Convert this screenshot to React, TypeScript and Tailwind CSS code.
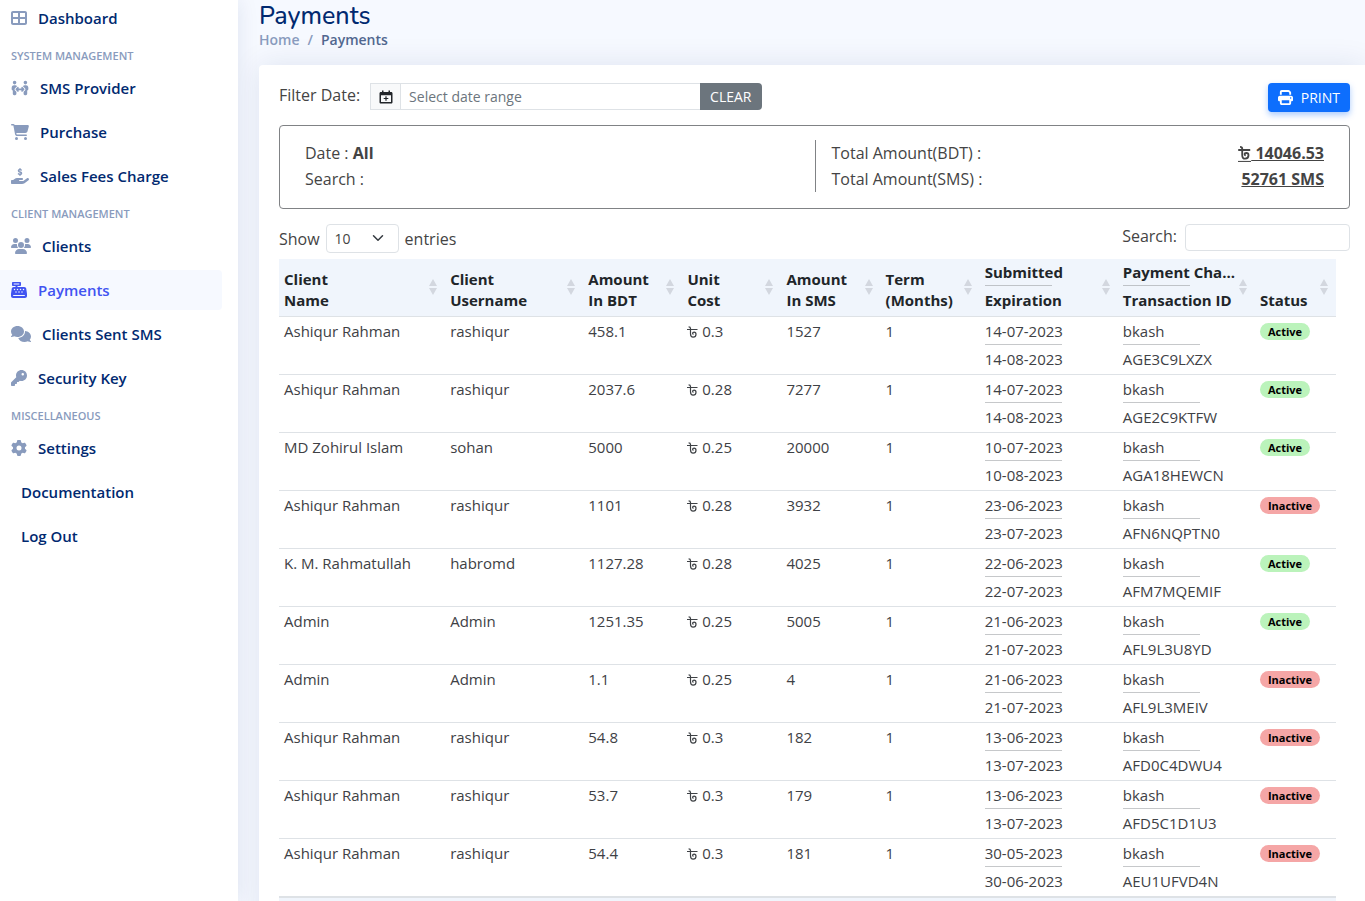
import type { ComponentType } from "react";
import {
  FaTableCellsLarge,
  FaPeopleArrows,
  FaCartShopping,
  FaHandHoldingDollar,
  FaUsers,
  FaCashRegister,
  FaComments,
  FaKey,
  FaGear,
  FaPrint,
} from "react-icons/fa6";

type NavLink = { label: string; icon?: ComponentType<{ className?: string }>; wide?: string; active?: boolean };
type NavGroup = { title?: string; links: NavLink[] };

const groups: NavGroup[] = [
  { links: [{ label: "Dashboard", icon: FaTableCellsLarge, wide: "w-4" }] },
  {
    title: "System Management",
    links: [
      { label: "SMS Provider", icon: FaPeopleArrows, wide: "w-[18px]" },
      { label: "Purchase", icon: FaCartShopping, wide: "w-[18px]" },
      { label: "Sales Fees Charge", icon: FaHandHoldingDollar, wide: "w-[18px]" },
    ],
  },
  {
    title: "Client Management",
    links: [
      { label: "Clients", icon: FaUsers, wide: "w-5" },
      { label: "Payments", icon: FaCashRegister, wide: "w-4", active: true },
      { label: "Clients Sent SMS", icon: FaComments, wide: "w-5" },
      { label: "Security Key", icon: FaKey, wide: "w-4" },
    ],
  },
  {
    title: "Miscellaneous",
    links: [{ label: "Settings", icon: FaGear, wide: "w-4" }, { label: "Documentation" }, { label: "Log Out" }],
  },
];

const columns = [
  { lines: ["Client", "Name"], width: "w-[166px]" },
  { lines: ["Client", "Username"], width: "w-[138px]" },
  { lines: ["Amount", "In BDT"], width: "w-[99px]" },
  { lines: ["Unit", "Cost"], width: "w-[99px]" },
  { lines: ["Amount", "In SMS"], width: "w-[99px]" },
  { lines: ["Term", "(Months)"], width: "w-[99px]" },
  { lines: ["Submitted", "Expiration"], width: "w-[138px]", ruled: true },
  { lines: ["Payment Cha...", "Transaction ID"], width: "w-[137px]", ruled: true },
  { lines: ["Status"], width: "w-[81px]" },
];

const rows = [
  ["Ashiqur Rahman", "rashiqur", "458.1", "0.3", "1527", "14-07-2023", "14-08-2023", "AGE3C9LXZX", "Active"],
  ["Ashiqur Rahman", "rashiqur", "2037.6", "0.28", "7277", "14-07-2023", "14-08-2023", "AGE2C9KTFW", "Active"],
  ["MD Zohirul Islam", "sohan", "5000", "0.25", "20000", "10-07-2023", "10-08-2023", "AGA18HEWCN", "Active"],
  ["Ashiqur Rahman", "rashiqur", "1101", "0.28", "3932", "23-06-2023", "23-07-2023", "AFN6NQPTN0", "Inactive"],
  ["K. M. Rahmatullah", "habromd", "1127.28", "0.28", "4025", "22-06-2023", "22-07-2023", "AFM7MQEMIF", "Active"],
  ["Admin", "Admin", "1251.35", "0.25", "5005", "21-06-2023", "21-07-2023", "AFL9L3U8YD", "Active"],
  ["Admin", "Admin", "1.1", "0.25", "4", "21-06-2023", "21-07-2023", "AFL9L3MEIV", "Inactive"],
  ["Ashiqur Rahman", "rashiqur", "54.8", "0.3", "182", "13-06-2023", "13-07-2023", "AFD0C4DWU4", "Inactive"],
  ["Ashiqur Rahman", "rashiqur", "53.7", "0.3", "179", "13-06-2023", "13-07-2023", "AFD5C1D1U3", "Inactive"],
  ["Ashiqur Rahman", "rashiqur", "54.4", "0.3", "181", "30-05-2023", "30-06-2023", "AEU1UFVD4N", "Inactive"],
];

/* Bengali taka sign; the total variant is bold and underlined */
function Taka({ total = false }: { total?: boolean }) {
  return (
    <svg
      role="img"
      aria-label="BDT"
      viewBox={total ? "0 0 11 14" : "0 0 11 12"}
      className={`inline-block ${total ? "h-4 w-[13px] align-[-3px]" : "h-3 w-[11px] align-[-1px]"}`}
      fill="none"
      stroke="currentColor"
      strokeWidth={total ? 1.6 : 1.2}
    >
      <path d="M0 3.500h10.500M1.600.8c1.300 0 1.900.5 1.900 1.600v5.400c0 2.100 1 3.300 2.600 3.300s2.900-1.200 2.900-2.900c0-1.300-.8-2.100-1.900-2.100-.9 0-1.500.5-1.500 1.200 0 .6.400.9 1 .9" />
      {total && <path d="M-1 13.500h13" strokeWidth="0.9" />}
    </svg>
  );
}

function CalendarPlus() {
  return (
    <svg viewBox="0 0 14 14" className="size-3.5" aria-hidden="true">
      <path
        fill="currentColor"
        fillRule="evenodd"
        d="M3 .5h1.500V2h5V.5H11V2h1.200c.7 0 1.300.6 1.300 1.300v8.900c0 .7-.6 1.300-1.300 1.300H1.800c-.7 0-1.300-.6-1.300-1.300V3.300C.5 2.600 1.100 2 1.800 2H3zM2 5.200V12h10V5.200zM6.400 6.300h1.200v1.600h1.700v1.200H7.600v1.700H6.400V9.100H4.700V7.900h1.700z"
      />
    </svg>
  );
}

function SortArrows() {
  return (
    <svg viewBox="0 0 8 16" className="h-4 w-2 shrink-0" fill="#d3d7df" aria-hidden="true">
      <path d="M4 0 8 7H0zM4 16 8 9H0z" />
    </svg>
  );
}

function NavItem({ link }: { link: NavLink }) {
  const Icon = link.icon;
  return (
    <li>
      <a
        href="#"
        aria-current={link.active ? "page" : undefined}
        className={`flex h-10 items-center rounded-r text-[15px] font-semibold ${
          link.active ? "bg-[#f6f9ff] text-[#4154f1]" : "text-[#012970]"
        } ${Icon ? "gap-[11px] pl-[11px]" : "pl-[21px]"}`}
      >
        {Icon && <Icon className={`h-4 shrink-0 ${link.wide} ${link.active ? "text-[#4154f1]" : "text-[#899bbd]"}`} />}
        {link.label}
      </a>
    </li>
  );
}

function Sidebar() {
  return (
    <aside className="z-10 w-[238px] shrink-0 bg-white pr-4 shadow-[0_0_20px_rgba(1,41,112,0.1)]">
      <nav aria-label="Main" className="-mt-0.5">
        {groups.map((group, i) => (
          <section key={i}>
            {group.title && (
              <h2 className="flex h-6 items-center pl-[11px] text-[11px] font-semibold text-[#899bbd] uppercase">
                {group.title}
              </h2>
            )}
            <ul className="flex flex-col gap-1 pb-[6px]">
              {group.links.map((link) => (
                <NavItem key={link.label} link={link} />
              ))}
            </ul>
          </section>
        ))}
      </nav>
    </aside>
  );
}

function Toolbar() {
  return (
    <div className="flex items-start justify-between">
      <div className="flex items-start">
        <label htmlFor="range" className="mr-[10px] text-base leading-6">
          Filter Date:
        </label>
        <span className="flex h-[27px] w-[31px] items-center justify-center border border-[#dee2e6] bg-[#f8f9fa] text-[#212529]">
          <CalendarPlus />
        </span>
        <input
          id="range"
          placeholder="Select date range"
          className="h-[27px] w-[299px] border-y border-[#dee2e6] px-2 text-sm outline-none placeholder:text-[#6c757d]"
        />
        <button className="h-[27px] rounded-r bg-[#6c757d] px-[10px] text-sm text-white">CLEAR</button>
      </div>
      <button className="flex h-[29px] items-center gap-2 rounded bg-[#0d6efd] px-[10px] text-sm text-white shadow-[0_3px_6px_rgba(13,110,253,0.35)]">
        <FaPrint className="size-[15px]" />
        PRINT
      </button>
    </div>
  );
}

function Summary() {
  return (
    <section className="mt-[13px] grid grid-cols-2 rounded border border-[#808285] px-[25px] pt-[14px] pb-4 text-base leading-[26px]">
      <div>
        <p>
          Date : <b>All</b>
        </p>
        <p>Search :</p>
      </div>
      <dl className="border-l border-[#808285] pl-4">
        <div className="flex h-[26px] justify-between">
          <dt>Total Amount(BDT) :</dt>
          <dd className="font-bold underline">
            <Taka total /> 14046.53
          </dd>
        </div>
        <div className="flex h-[26px] justify-between">
          <dt>Total Amount(SMS) :</dt>
          <dd className="font-bold underline">52761 SMS</dd>
        </div>
      </dl>
    </section>
  );
}

function TableControls() {
  return (
    <div className="mt-[11px] flex items-start justify-between text-base">
      <label className="mt-1 flex items-center gap-[6px] leading-6">
        Show
        <span className="relative">
          <select defaultValue="10" className="block h-[29px] w-[73px] appearance-none rounded border border-[#dee2e6] bg-white pl-2 text-sm">
            <option>10</option>
            <option>25</option>
            <option>50</option>
          </select>
          <svg viewBox="0 0 16 16" className="pointer-events-none absolute top-2 right-[15px] size-3" fill="none" stroke="#343a40" strokeWidth="2" strokeLinecap="round" strokeLinejoin="round" aria-hidden="true">
            <path d="m2 5 6 6 6-6" />
          </svg>
        </span>
        entries
      </label>
      <label className="mt-1 flex items-start gap-2 leading-6">
        Search:
        <input type="search" className="h-[27px] w-[165px] rounded border border-[#dee2e6] px-2 text-sm outline-none" />
      </label>
    </div>
  );
}

function PaymentsTable() {
  return (
    <table className="mt-[6px] w-[calc(100%-14px)] table-fixed border-collapse text-left text-[15px]">
      <thead>
        <tr className="h-[57px] border-b border-[#dee2e6] bg-[#f0f5fc] text-[#212529]">
          {columns.map((col) => (
            <th key={col.lines.join()} className={`${col.width} pt-px pr-2 pb-[5px] pl-[5px] align-bottom font-bold`}>
              <div className="flex items-end justify-between">
                <div className="w-0 flex-1 leading-[21px] whitespace-nowrap">
                  {col.ruled ? (
                    <>
                      <div className="leading-5">{col.lines[0]}</div>
                      <hr className="mt-[3px] mb-1 w-[67px] border-[#bfc3c8]" />
                      <div>{col.lines[1]}</div>
                    </>
                  ) : (
                    col.lines.map((line) => <div key={line}>{line}</div>)
                  )}
                </div>
                <span className="mb-4 flex">
                  <SortArrows />
                </span>
              </div>
            </th>
          ))}
        </tr>
      </thead>
      <tbody>
        {rows.map(([name, user, bdt, cost, sms, from, to, trx, status]) => (
          <tr key={trx} className="border-b border-[#dee2e6] align-top leading-[21px] text-[#3e4145] last:border-b-2">
            <td className="px-[5px] py-1">{name}</td>
            <td className="px-[5px] py-1">{user}</td>
            <td className="px-[5px] py-1">{bdt}</td>
            <td className="px-[5px] py-1">
              <Taka /> {cost}
            </td>
            <td className="px-[5px] py-1">{sms}</td>
            <td className="px-[5px] py-1">1</td>
            <td className="px-[5px] py-1">
              {from}
              <hr className="mt-[2px] mb-1 w-[77px] border-[#c6c8ca]" />
              {to}
            </td>
            <td className="px-[5px] py-1">
              bkash
              <hr className="mt-[2px] mb-1 w-[77px] border-[#c6c8ca]" />
              {trx}
            </td>
            <td className="px-[5px] py-[6px]">
              <span
                className={`block w-fit rounded-full px-2 text-[11px] leading-[17px] font-bold text-black ${
                  status === "Active" ? "bg-[#bbf3bb]" : "bg-[#f5a6a6]"
                }`}
              >
                {status}
              </span>
            </td>
          </tr>
        ))}
      </tbody>
      <tfoot>
        <tr className="h-14 bg-[#f0f5fc]">
          <td colSpan={9} />
        </tr>
      </tfoot>
    </table>
  );
}

export default function App() {
  return (
    <div className="flex h-screen overflow-hidden bg-[#f6f9ff] font-['Open_Sans','Noto_Sans',sans-serif] text-[#444444]">
      <Sidebar />
      <main className="min-w-0 flex-1 pl-[21px]">
        <header className="pt-[2px]">
          <h1 className="font-['Nunito','Open_Sans',sans-serif] text-[25px] leading-7 font-medium text-[#012970]">Payments</h1>
          <nav aria-label="Breadcrumb" className="flex gap-2 text-sm leading-5 font-semibold text-[#899bbd]">
            <a href="#">Home</a>
            <span>/</span>
            <span className="text-[#51678f]">Payments</span>
          </nav>
        </header>
        <section className="mt-[15px] rounded-tl bg-white px-[15px] pt-[18px] pb-5 pl-5 shadow-[0_0_30px_rgba(1,41,112,0.1)]">
          <Toolbar />
          <Summary />
          <TableControls />
          <PaymentsTable />
        </section>
      </main>
    </div>
  );
}
